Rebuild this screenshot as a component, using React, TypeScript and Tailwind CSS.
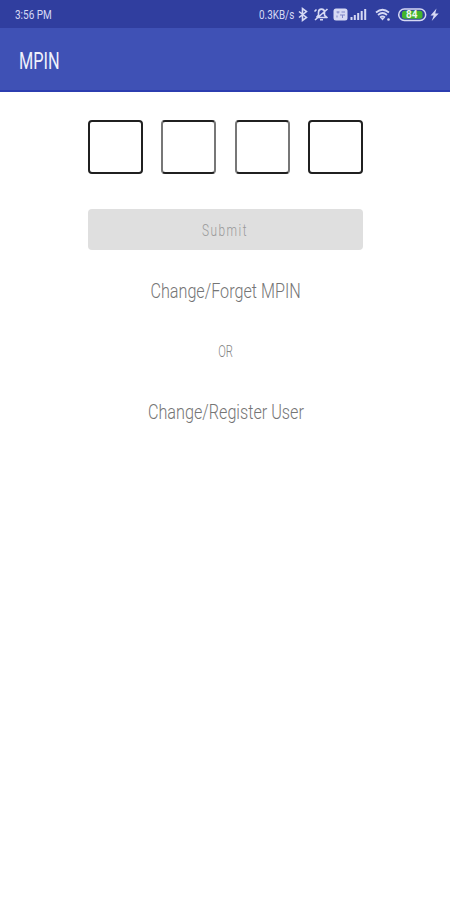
import React from 'react';

function StatusBar() {
  return (
    <div className="flex h-7 items-center bg-[#303e9f] pl-[15px] text-[#d6d9f4]">
      <span className="w-[60px] origin-left scale-x-[0.74] whitespace-nowrap text-[13.5px] leading-7">3:56 PM</span>
      <div className="ml-auto flex h-full items-center">
        <span className="w-[38px] origin-left scale-x-[0.79] whitespace-nowrap pt-0.5 text-[12.5px] leading-7">0.3KB/s</span>
        <svg width="153" height="28" viewBox="297 0 153 28" fill="none" stroke="currentColor">
          <path d="M299 11.500l7.500 6-4 3V8.500l4 3-7.500 6" strokeWidth="1.600" />
          <path d="M316.500 17.500h9.500l-1.500-2.500v-2.500c0-4.500-6-4.500-6 0v2.500l-2 2.500M320 19.800h3M315 20L327.500 9M314.500 11.500l2-2M325.500 16l2 2" strokeWidth="1.600" />
          <rect x="333.500" y="8.500" width="14" height="12" rx="2.500" fill="currentColor" stroke="none" />
          <path d="M336.500 12h3M338 11.500v2M341.500 12h3.500M337 15.500v2M340 15h5M342.500 15v3" stroke="#7f86c6" strokeWidth="1" />
          <path d="M351.500 20v-3M354.800 20v-5M358.200 20v-7M361.700 20v-9M365.200 20V9" strokeWidth="2" />
          <path d="M376 12.500q6.500-5.500 13 0M378 15q4.500-4 9 0M380 17.500q2.500-2 5 0" strokeWidth="1.700" />
          <path d="M380.500 18h4l-2 2.500z" fill="currentColor" stroke="none" />
          <circle cx="388.500" cy="19.500" r="1.300" fill="currentColor" stroke="none" />
          <rect x="398.700" y="9" width="27" height="11.500" rx="5.700" strokeWidth="1.500" />
          <rect x="402" y="10.800" width="20.500" height="8" rx="2.500" fill="#43b52c" stroke="none" />
          <text x="406" y="18.300" fontSize="10" fontWeight="700" textLength="11.500" lengthAdjust="spacingAndGlyphs" fill="#edf5ef" stroke="none">84</text>
          <path d="M436.500 8.500l-6 7h3.200l-2 5.500 7-7.500h-3.500z" fill="currentColor" stroke="none" />
        </svg>
      </div>
    </div>
  );
}

export default function App() {
  return (
    <main className="flex h-[900px] w-[450px] flex-col overflow-hidden bg-white font-['Roboto','Liberation_Sans',sans-serif]">
      <StatusBar />
      <header className="flex h-16 items-center border-b-2 border-[#2c3db0] bg-[#3f51b5] pl-[19px]">
        <h1 className="origin-left scale-x-[0.68] pt-1 text-2xl leading-8 text-[#f0f1fb]">MPIN</h1>
      </header>
      <section className="flex flex-col items-center pt-7 pl-px">
        <div className="flex w-[275px] justify-between">
          {[0, 1, 2, 3].map((digit) => (
            <div
              key={digit}
              className={`h-[54px] w-[55px] rounded-[4px] border-2 border-[#202020] ${digit === 1 || digit === 2 ? 'border-x-[#777777]' : ''}`}
            />
          ))}
        </div>
        <button className="mt-[35px] flex h-[41px] w-[275px] items-center justify-center rounded-[4px] bg-[#dfdfdf] text-[#999999]">
          <span className="scale-x-[0.74] pt-0.5 text-base font-light tracking-[2px]">Submit</span>
        </button>
        <a className="mt-[26px] scale-x-[0.83] whitespace-nowrap text-[19.5px] leading-8 font-light text-[#757575]">Change/Forget MPIN</a>
        <span className="mt-7 scale-x-[0.7] text-base leading-8 font-light text-[#858585]">OR</span>
        <a className="mt-[29px] scale-x-[0.83] whitespace-nowrap text-[19.5px] leading-8 font-light text-[#757575]">Change/Register User</a>
      </section>
    </main>
  );
}
